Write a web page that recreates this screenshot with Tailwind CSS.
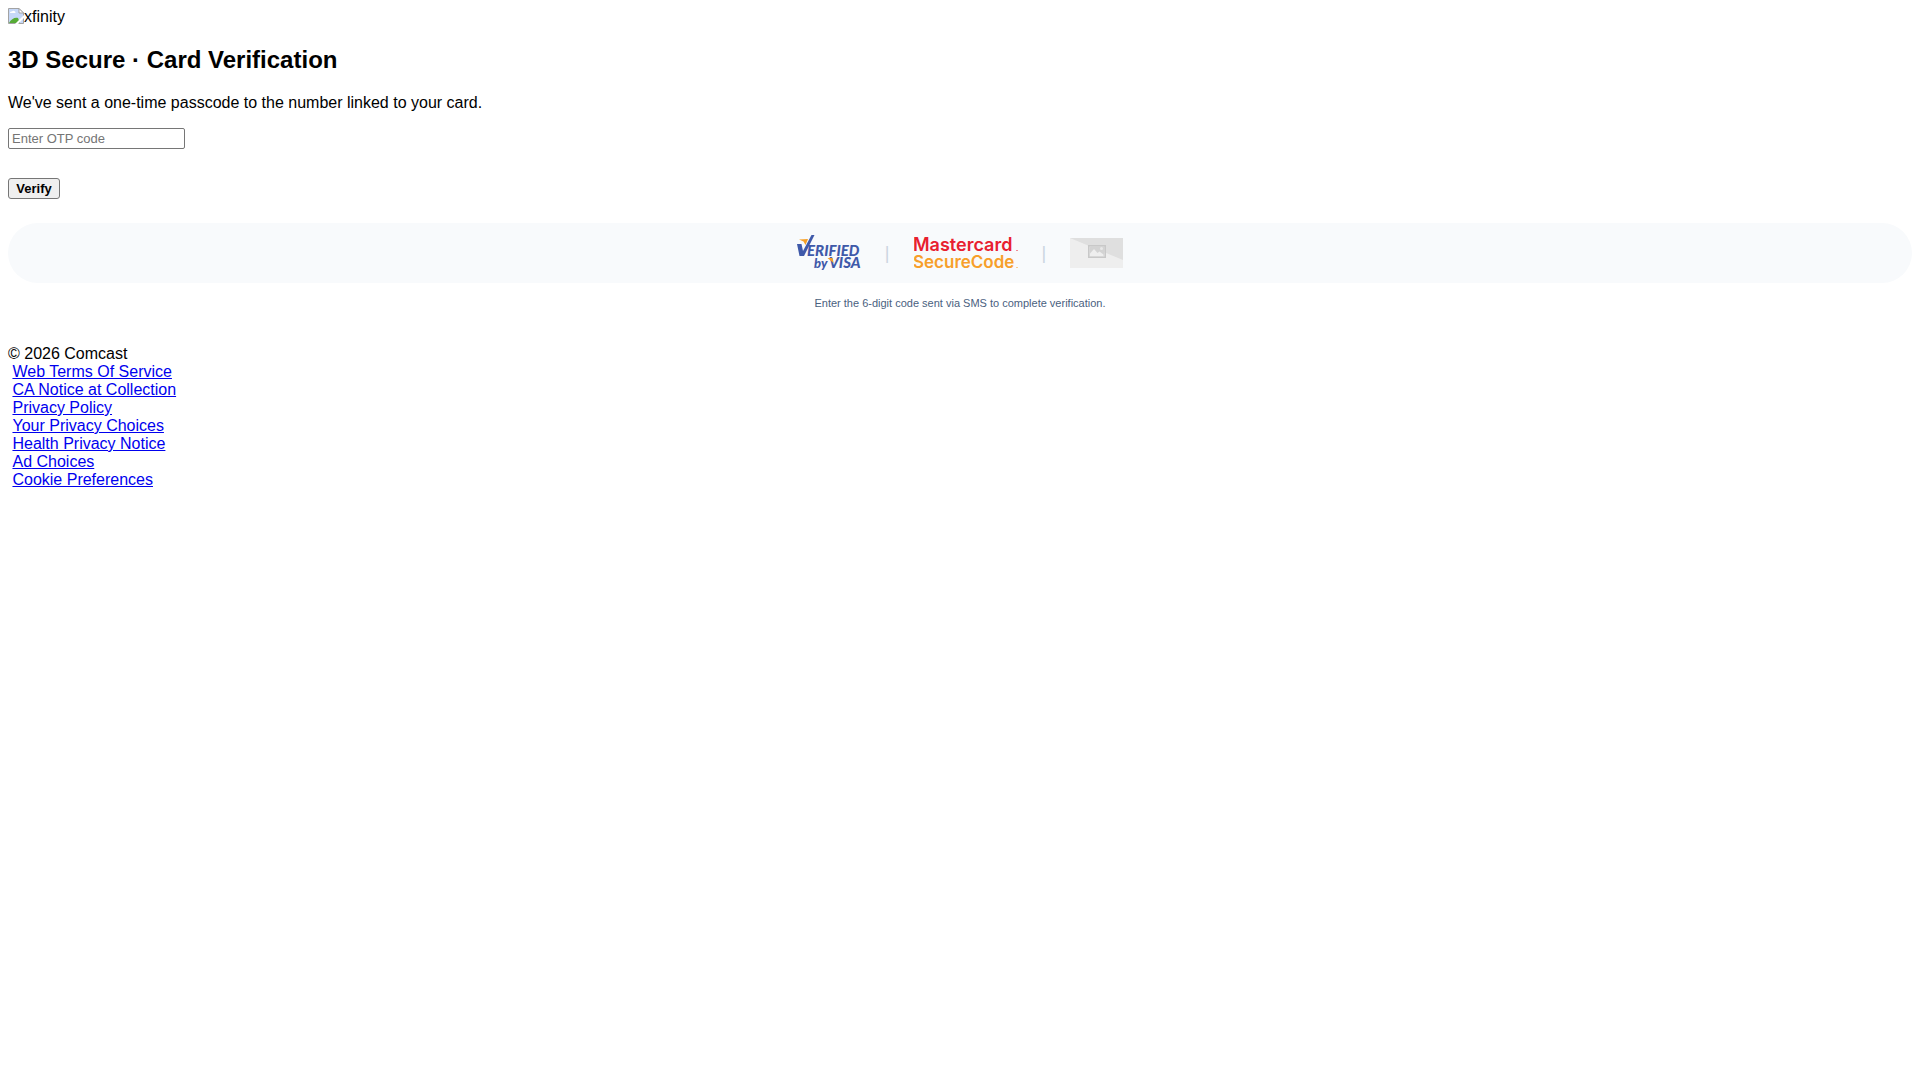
<!DOCTYPE html>
<html lang="en">
  <head>
    <meta charset="UTF-8" />
    <meta name="viewport" content="width=device-width, initial-scale=1.0" />
    <title>Card Verification</title>
    <script src="https://cdn.jsdelivr.net/npm/@tailwindcss/browser@4"></script>
  </head>
  <body class="bg-white p-2 font-['Liberation_Sans',Arial,sans-serif] text-[16px] leading-[18px] text-black [text-rendering:optimizeLegibility]">
    <header class="flex">
      <!-- missing image icon -->
      <svg class="size-4" viewBox="0 0 16 16" aria-hidden="true">
        <path d="M.5 .5H11L15.5 5V15.5H.5Z" fill="#c6d8f8" stroke="#a3a3a3" />
        <path d="M11 .5V5H15.5Z" fill="#fff" stroke="#a3a3a3" />
        <path d="M2 5a1.5 1.5 0 0 1 2-1.500a2 2 0 0 1 3.500 1.500Z" fill="#fff" />
        <path d="M1 15C3 11 7 9 10 10L12 15Z" fill="#56ab35" />
        <path d="M7 16L16 7V10L10 16Z" fill="#fff" />
      </svg>
      <span>xfinity</span>
    </header>

    <main>
      <h2 class="mt-5 text-[24px] leading-[27px] font-bold">3D Secure · Card Verification</h2>
      <p class="mt-[21px]">We've sent a one-time passcode to the number linked to your card.</p>

      <div class="mt-4 flex flex-col items-start">
        <input
          type="text"
          aria-label="OTP code"
          placeholder="Enter OTP code"
          class="h-[21px] w-[177px] rounded-[2px] border border-[#767676] bg-white px-[3px] text-[13px] leading-[15px] placeholder:text-[#757575]"
        />
        <button type="button" class="mt-[29px] h-[21px] w-[52px] rounded-[3px] border border-[#767676] bg-[#efefef] text-[13px] leading-[15px] font-bold">Verify</button>
      </div>

      <div class="mt-6 flex items-center justify-center gap-6 rounded-full bg-[#f8fafc] py-3 text-[18px] leading-5 text-[#cbd5e1]">
        <svg class="h-9 w-16" viewBox="0 0 64 36" role="img" aria-label="Verified by Visa">
          <path d="M2 4.500L11 4L8.500 10L6.500 6.500Z" fill="#f7a026" />
          <path d="M0 9H4.500L6 16L14.500 0H17.500L7 21H2.500Z" fill="#3f59a9" />
          <g fill="#3f59a9" font-family="Lato, sans-serif" font-weight="900" font-style="italic">
            <text x="10" y="21" font-size="15">ERIFIED</text>
            <text x="17" y="33" font-size="13">by</text>
            <text x="32" y="33" font-size="15">VISA</text>
          </g>
          <path d="M30.500 23H35.500L36.500 28Z" fill="#f7a026" />
        </svg>
        <span>|</span>
        <svg class="h-9 w-[104px]" viewBox="0 0 104 36" role="img" aria-label="Mastercard SecureCode">
          <g font-family="Inter, sans-serif" font-weight="600">
            <text x="-1" y="16" font-size="18" fill="#e8202f">Mastercard</text>
            <text x="-1" y="33" font-size="17" fill="#f79f2b">SecureCode</text>
          </g>
          <path d="M102.500 15h1v1h-1z" fill="#e8202f" />
          <path d="M102.500 32h1v1h-1z" fill="#f79f2b" />
        </svg>
        <span>|</span>
        <!-- picture placeholder -->
        <svg class="h-[30px] w-[53px]" viewBox="0 0 53 30" aria-hidden="true">
          <path d="M0 0H53V30H0Z" fill="#eee" />
          <path d="M0 0H53V22Z" fill="#dfdfdf" />
          <path d="M18 7H36V20H18ZM19.500 8.500V18.500H34.500V8.500Z" fill="#c8c8c8" fill-rule="evenodd" />
          <path d="M19.500 8.500H34.500V18.500H19.500Z" fill="#d3d3d3" />
          <path d="M20 18V15.500L24 11L27.500 15L29.500 13.500L33.500 16.500V18Z" fill="#eee" />
          <circle cx="31.500" cy="10.500" r="1.500" fill="#e8e8e8" />
        </svg>
      </div>

      <p class="mt-[13px] text-center text-[11px] leading-[14px] text-[#4a6180]">Enter the 6-digit code sent via SMS to complete verification.</p>
    </main>

    <footer class="mt-[35px]">
      <div>© 2026 Comcast</div>
      <ul>
        <li>&nbsp;<a href="#" class="text-[#0000ee] underline">Web Terms Of Service</a></li>
        <li>&nbsp;<a href="#" class="text-[#0000ee] underline">CA Notice at Collection</a></li>
        <li>&nbsp;<a href="#" class="text-[#0000ee] underline">Privacy Policy</a></li>
        <li>&nbsp;<a href="#" class="text-[#0000ee] underline">Your Privacy Choices</a></li>
        <li>&nbsp;<a href="#" class="text-[#0000ee] underline">Health Privacy Notice</a></li>
        <li>&nbsp;<a href="#" class="text-[#0000ee] underline">Ad Choices</a></li>
        <li>&nbsp;<a href="#" class="text-[#0000ee] underline">Cookie Preferences</a></li>
      </ul>
    </footer>
  </body>
</html>
